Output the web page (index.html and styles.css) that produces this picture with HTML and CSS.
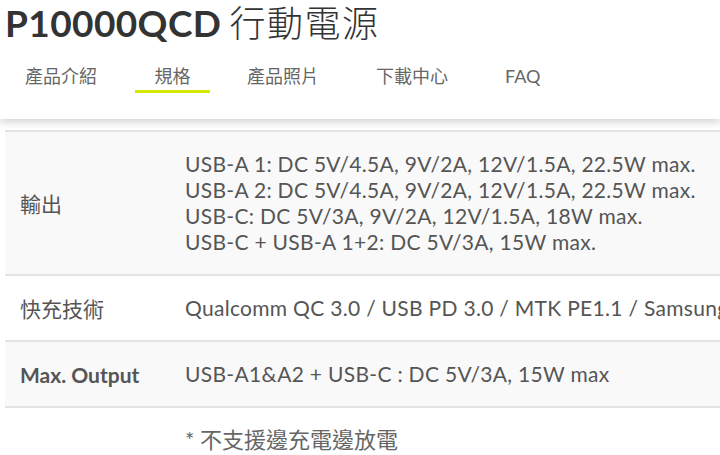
FILE: index.html
```html
<!DOCTYPE html>
<html lang="zh-Hant">
<head>
  <meta charset="UTF-8">
  <title>P10000QCD 行動電源 – 規格</title>
  <link rel="stylesheet" href="styles.css">
</head>
<body>

<header class="top">
  <h1 class="title"><span class="model">P10000QCD</span> <span class="zh">行動電源</span></h1>
  <nav class="tabs">
    <a href="#intro">產品介紹</a>
    <a href="#spec" class="active">規格</a>
    <a href="#photos">產品照片</a>
    <a href="#download">下載中心</a>
    <a href="#faq">FAQ</a>
  </nav>
</header>

<main class="spec">
  <table class="spec-table">
    <tr class="alt">
      <th>輸出</th>
      <td class="multi">
        USB-A 1: DC 5V/4.5A, 9V/2A, 12V/1.5A, 22.5W max.<br>
        USB-A 2: DC 5V/4.5A, 9V/2A, 12V/1.5A, 22.5W max.<br>
        USB-C: DC 5V/3A, 9V/2A, 12V/1.5A, 18W max.<br>
        USB-C + USB-A 1+2: DC 5V/3A, 15W max.
      </td>
    </tr>
    <tr>
      <th>快充技術</th>
      <td>Qualcomm QC 3.0 / USB PD 3.0 / MTK PE1.1 / Samsung AFC / Huawei FCP</td>
    </tr>
    <tr class="alt">
      <th class="en">Max. Output</th>
      <td>USB-A1&amp;A2 + USB-C : DC 5V/3A, 15W max</td>
    </tr>
    <tr>
      <th></th>
      <td class="note">
        * 不支援邊充電邊放電<br>
        * 充電時間及輸出效率會因為使用的充電器及線材不同而有所差異
      </td>
    </tr>
  </table>
</main>

</body>
</html>
```

FILE: styles.css
```css
html, body {
  margin: 0;
  padding: 0;
  overflow: hidden;
}
body {
  font-family: 'Lato', 'Noto Sans CJK TC', sans-serif;
  background: #fff;
  color: #555;
}
.top {
  position: relative;
  z-index: 2;
  background: #fff;
  height: 119px;
  box-shadow: 0 3px 8px rgba(0, 0, 0, 0.18);
}
.title {
  margin: 0;
  padding: 0 0 0 5px;
  height: 42px;
  line-height: 42px;
  font-weight: 400;
  color: #333;
  white-space: nowrap;
}
.title .model {
  font-size: 37px;
  font-weight: 700;
  letter-spacing: 0.4px;
}
.title .zh {
  font-family: 'Noto Sans CJK TC', sans-serif;
  font-size: 36px;
  font-weight: 300;
  letter-spacing: 1.5px;
}
.tabs {
  display: flex;
  margin-top: 23px;
  padding-left: 25px;
}
.tabs a {
  display: block;
  font-size: 18px;
  line-height: 22px;
  color: #666;
  text-decoration: none;
  padding-bottom: 3px;
  border-bottom: 3px solid transparent;
}
.tabs a:nth-child(1) { width: 74px; margin-right: 36px; }
.tabs a:nth-child(2) { width: 75px; margin-right: 37px; text-align: center; }
.tabs a:nth-child(3) { width: 74px; margin-right: 55px; }
.tabs a:nth-child(4) { width: 74px; margin-right: 55px; }
.tabs a.active {
  border-bottom-color: #d4e800;
}
.spec {
  padding: 11px 0 0 5px;
}
.spec-table {
  border-collapse: collapse;
  width: 1000px;
  border-top: 2px solid #e4e4e4;
}
.spec-table th,
.spec-table td {
  text-align: left;
  vertical-align: middle;
  border-bottom: 2px solid #e4e4e4;
  white-space: nowrap;
}
.spec-table th {
  width: 165px;
  padding: 0 0 0 15px;
  font-size: 21px;
  font-weight: 400;
  color: #555;
}
.spec-table th.en {
  font-weight: 700;
  font-size: 21px;
}
.spec-table td {
  padding: 0;
  font-size: 21px;
  line-height: 26px;
  letter-spacing: 0.3px;
  color: #555;
}
.spec-table tr {
  height: 66px;
}
.spec-table td.multi {
  padding: 19px 0;
}
.spec-table tr.alt {
  background: #f9f9f9;
}
.spec-table td.note {
  vertical-align: top;
  padding-top: 18px;
  font-size: 22px;
  line-height: 27px;
  letter-spacing: 0;
  color: #666;
}
```
